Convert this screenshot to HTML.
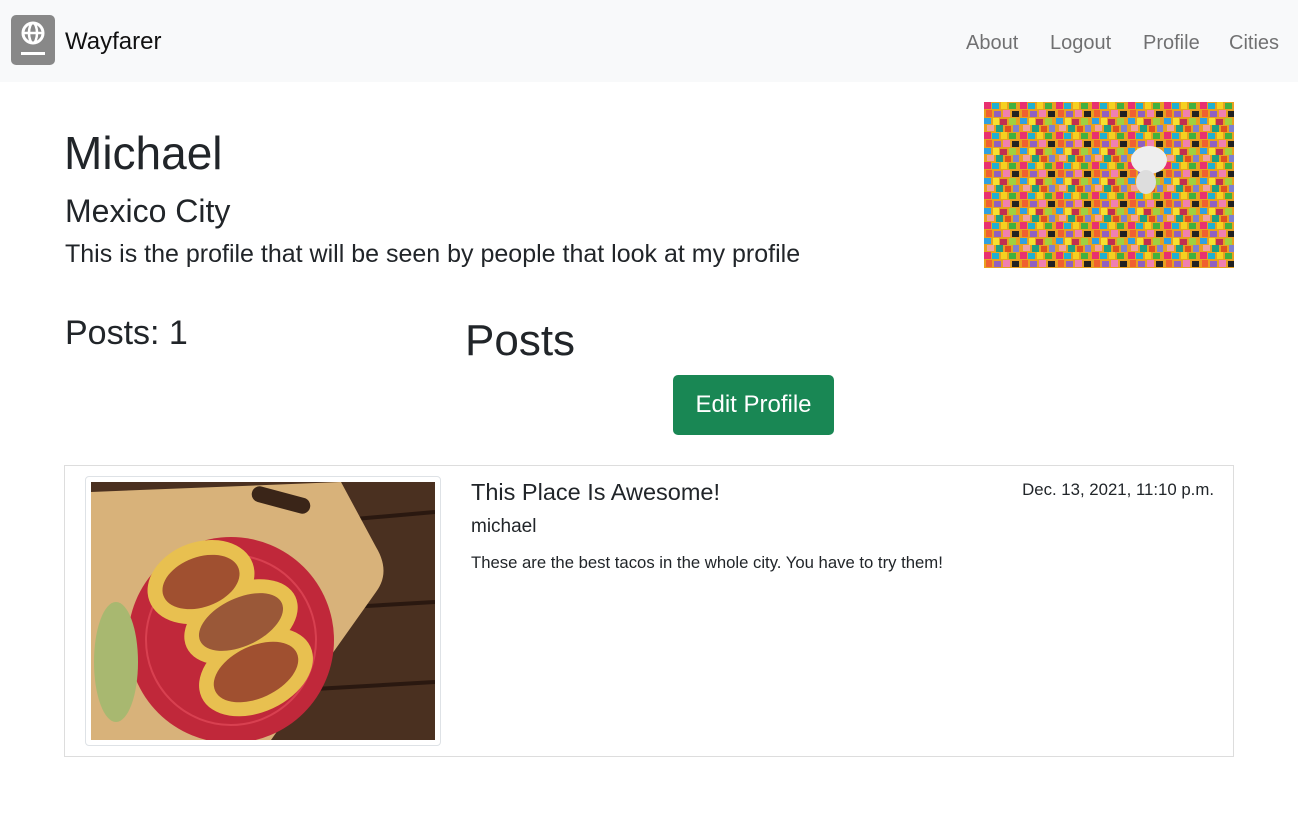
<!DOCTYPE html>
<html><head><meta charset="utf-8"><style>
*{box-sizing:border-box;margin:0;padding:0}
body{width:1298px;height:817px;background:#fff;font-family:"Liberation Sans",sans-serif;color:#212529;position:relative;overflow:hidden}
.nav{position:absolute;left:0;top:0;width:1298px;height:82px;background:#f8f9fa}
.logo{position:absolute;left:11px;top:15px;width:44px;height:50px;background:#888;border-radius:5px}
.brand{position:absolute;left:65px;top:28px;font-size:24px;color:#111}
.nl{position:absolute;top:32px;font-size:20px;color:rgba(0,0,0,.55)}
.a{position:absolute;white-space:nowrap}
</style></head><body>
<div class="nav">
<div class="logo"><svg width="44" height="50" viewBox="0 0 44 50"><circle cx="22" cy="18" r="10" fill="none" stroke="#fff" stroke-width="3"/><line x1="12" y1="18" x2="32" y2="18" stroke="#fff" stroke-width="2.5"/><ellipse cx="22" cy="18" rx="4" ry="10" fill="none" stroke="#fff" stroke-width="2.5"/><rect x="10" y="37" width="24" height="3" fill="#fff"/></svg></div>
<div class="brand">Wayfarer</div>
<div class="nl" style="left:966px">About</div>
<div class="nl" style="left:1050px">Logout</div>
<div class="nl" style="left:1143px">Profile</div>
<div class="nl" style="left:1229px">Cities</div>
</div>
<div class="a" style="left:64px;top:126px;font-size:46px">Michael</div>
<div class="a" style="left:65px;top:193px;font-size:32px">Mexico City</div>
<div class="a" style="left:65px;top:240px;font-size:25px">This is the profile that will be seen by people that look at my profile</div>
<svg class="a" style="left:984px;top:102px" width="250" height="166">
<defs><pattern id="b" width="36" height="30" patternUnits="userSpaceOnUse">
<rect width="36" height="30" fill="#e8a020"/>
<rect x="0" y="0" width="7" height="7" fill="#e83070"/><rect x="8" y="1" width="7" height="6" fill="#20b0d0"/><rect x="17" y="0" width="6" height="7" fill="#f5d020"/><rect x="25" y="1" width="7" height="6" fill="#40b040"/>
<rect x="2" y="8" width="6" height="7" fill="#f06030"/><rect x="10" y="9" width="7" height="6" fill="#9060c0"/><rect x="19" y="8" width="7" height="7" fill="#f080b0"/><rect x="28" y="9" width="7" height="6" fill="#222"/>
<rect x="0" y="16" width="7" height="6" fill="#30a0e0"/><rect x="9" y="16" width="6" height="7" fill="#f5e030"/><rect x="16" y="17" width="7" height="6" fill="#c03050"/><rect x="25" y="16" width="7" height="7" fill="#a0d040"/>
<rect x="3" y="23" width="7" height="6" fill="#f0a0a0"/><rect x="12" y="23" width="7" height="7" fill="#20a080"/><rect x="21" y="24" width="6" height="6" fill="#e05020"/><rect x="29" y="23" width="6" height="7" fill="#8080d0"/>
</pattern></defs>
<rect width="250" height="166" fill="url(#b)"/>
<ellipse cx="165" cy="58" rx="18" ry="14" fill="#eee"/><ellipse cx="162" cy="80" rx="10" ry="12" fill="#ddd"/>
</svg>
<div class="a" style="left:65px;top:314px;font-size:34px">Posts: 1</div>
<div class="a" style="left:465px;top:316px;font-size:44px">Posts</div>
<div class="a" style="left:673px;top:375px;width:161px;height:60px;background:#198754;border-radius:5px;color:#fff;font-size:24px;text-align:center;line-height:60px">Edit Profile</div>
<div class="a" style="left:64px;top:465px;width:1170px;height:292px;border:1px solid #ddd"></div>
<div class="a" style="left:85px;top:476px;width:356px;height:270px;border:1px solid #dee2e6;border-radius:4px"></div>
<svg class="a" style="left:91px;top:482px" width="344" height="258" viewBox="0 0 344 258">
<rect width="344" height="258" fill="#4a3020"/>
<path d="M0 60 L344 30 M0 140 L344 120 M0 220 L344 200" stroke="#2a1810" stroke-width="4"/>
<path d="M0 10 L250 0 L285 65 Q300 90 285 110 L180 258 L0 258Z" fill="#d8b27a"/>
<rect x="160" y="10" width="60" height="16" rx="8" fill="#3a2518" transform="rotate(15 190 18)"/>
<circle cx="140" cy="158" r="103" fill="#c0283a"/>
<circle cx="140" cy="158" r="85" fill="none" stroke="#d84050" stroke-width="2"/>
<ellipse cx="110" cy="100" rx="55" ry="40" fill="#e8c050" transform="rotate(-20 110 100)"/>
<ellipse cx="150" cy="140" rx="60" ry="38" fill="#e8c050" transform="rotate(-25 150 140)"/>
<ellipse cx="165" cy="190" rx="60" ry="40" fill="#e8c050" transform="rotate(-25 165 190)"/>
<ellipse cx="110" cy="100" rx="40" ry="25" fill="#a05030" transform="rotate(-20 110 100)"/>
<ellipse cx="150" cy="140" rx="45" ry="24" fill="#9a5838" transform="rotate(-25 150 140)"/>
<ellipse cx="165" cy="190" rx="45" ry="26" fill="#a05030" transform="rotate(-25 165 190)"/>
<ellipse cx="25" cy="180" rx="22" ry="60" fill="#a8b870"/>
</svg>
<div class="a" style="left:471px;top:479px;font-size:23.5px">This Place Is Awesome!</div>
<div class="a" style="right:84px;top:480px;font-size:16.8px">Dec. 13, 2021, 11:10 p.m.</div>
<div class="a" style="left:471px;top:516px;font-size:19px">michael</div>
<div class="a" style="left:471px;top:553px;font-size:16.7px">These are the best tacos in the whole city. You have to try them!</div>
</body></html>
